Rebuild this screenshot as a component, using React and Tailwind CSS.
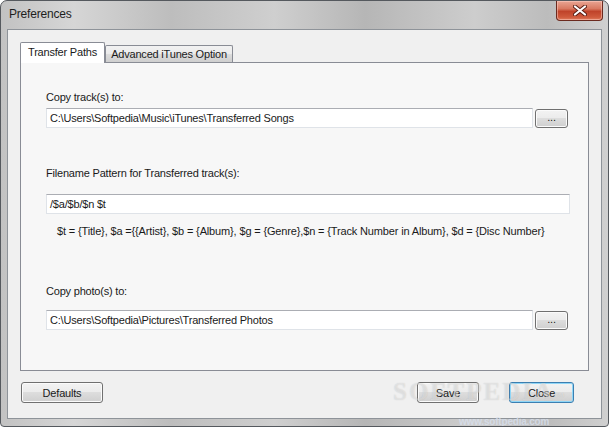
import React from 'react';

function PathRow({ value, browse = true }) {
  return (
    <div className={`flex items-center ${browse ? 'mr-[2px]' : ''}`}>
      <div className="flex h-[20px] flex-1 items-center border border-[#dfe3e8] border-t-[#abadb3] bg-white pl-[3px] leading-[14px]">
        {value}
      </div>
      {browse && (
        <button
          type="button"
          className="ml-[2px] mt-[1px] flex h-[19px] w-[33px] items-center justify-center rounded-[3px] border border-[#707070] bg-[linear-gradient(180deg,#f3f3f3_0%,#ebebeb_50%,#dddddd_50%,#cfcfcf_100%)] pb-[3px] text-[11px] leading-none shadow-[inset_0_0_0_1px_#fbfbfb]"
        >
          ...
        </button>
      )}
    </div>
  );
}

function WinButton({ label, className = '', isDefault = false }) {
  return (
    <button
      type="button"
      className={`flex h-[21px] items-center justify-center rounded-[3px] border bg-[linear-gradient(180deg,#f3f3f3_0%,#ebebeb_50%,#dddddd_50%,#cfcfcf_100%)] leading-[14px] ${
        isDefault
          ? 'border-[#3c7fb1] shadow-[inset_0_0_0_1px_#8fd6f7]'
          : 'border-[#707070] shadow-[inset_0_0_0_1px_#fbfbfb]'
      } ${className}`}
    >
      {label}
    </button>
  );
}

export default function App() {
  return (
    <div className="h-[427px] w-[609px] bg-white font-['Liberation_Sans',Arial,sans-serif] text-[11px] tracking-[-0.2px] text-[#1a1a1a]">
      <div className="relative flex h-full flex-col overflow-hidden rounded-t-[7px] rounded-b-[4px] border border-[#55595e] bg-[linear-gradient(90deg,#c2c2c2_0%,#d6d6d6_12%,#bdbdbd_28%,#cfcfcf_45%,#b6b6b6_60%,#cdcdcd_78%,#bcbcbc_90%,#d0d0d0_100%)]">
        {/* title bar */}
        <div className="flex h-[28px] items-center pl-[8px] pb-[2px] text-[12px] leading-[14px] text-[#1e1e1e]">
          Preferences
        </div>

        {/* close box */}
        <div className="absolute right-[5px] top-0 flex h-[20px] w-[47px] items-center justify-center rounded-b-[4px] border border-t-0 border-[#6b2a1f] bg-[linear-gradient(180deg,#e9a593_0%,#d97a62_40%,#c0432a_55%,#cf5a3c_85%,#e07c5e_100%)] shadow-[inset_0_0_0_1px_rgba(255,210,200,0.5)]">
          <svg width="14" height="11" viewBox="0 0 14 11">
            <path d="M2 1.5 L12 9.5 M12 1.5 L2 9.5" stroke="#5a1e14" strokeWidth="4" strokeLinecap="round" />
            <path d="M2 1.5 L12 9.5 M12 1.5 L2 9.5" stroke="#ffffff" strokeWidth="2.2" strokeLinecap="round" />
          </svg>
        </div>

        {/* client area */}
        <div className="mx-[6px] flex h-[390px] flex-col border border-[#8e9399] bg-[#f0f0f0] px-[12px] pt-[12px]">
          {/* tabs */}
          <div className="flex h-[20px] items-end">
            <div className="relative z-10 -mb-px flex h-[21px] w-[85px] items-center justify-center whitespace-nowrap rounded-t-[2px] border border-b-0 border-[#898c95] bg-white pb-[2px] leading-[14px]">
              Transfer Paths
            </div>
            <div className="flex h-[17px] w-[128px] items-center justify-center whitespace-nowrap rounded-t-[2px] border border-b-0 border-[#898c95] bg-[linear-gradient(180deg,#f2f2f2_0%,#ebebeb_50%,#dddddd_50%,#cfcfcf_100%)] leading-[14px]">
              Advanced iTunes Option
            </div>
          </div>

          {/* panel */}
          <div className="flex h-[309px] flex-col border border-[#898c95] bg-[#f7f7f7] pl-[25px] pr-[18px] pt-[27px]">
            <div className="leading-[14px]">Copy track(s) to:</div>
            <div className="mt-[4px]">
              <PathRow value="C:\Users\Softpedia\Music\iTunes\Transferred Songs" />
            </div>

            <div className="mt-[38px] leading-[14px]">Filename Pattern for Transferred track(s):</div>
            <div className="mt-[14px]">
              <PathRow value="/$a/$b/$n $t" browse={false} />
            </div>
            <div className="mt-[10px] whitespace-nowrap pl-[11px] leading-[14px] tracking-[-0.15px]">
              {'$t = {Title}, $a ={{Artist}, $b = {Album}, $g = {Genre},$n = {Track Number in Album}, $d = {Disc Number}'}
            </div>

            <div className="mt-[46px] leading-[14px]">Copy photo(s) to:</div>
            <div className="mt-[12px]">
              <PathRow value="C:\Users\Softpedia\Pictures\Transferred Photos" />
            </div>
          </div>

          {/* buttons */}
          <div className="mt-[11px] flex items-center">
            <WinButton label="Defaults" className="ml-[1px] w-[82px]" />
            <div className="flex-1" />
            <WinButton label="Save" className="w-[62px]" />
            <WinButton label="Close" className="ml-[30px] mr-[15px] w-[65px]" isDefault />
          </div>
        </div>

        {/* watermark */}
        <div className="pointer-events-none absolute left-[392px] top-[377px] font-['Liberation_Serif',serif] text-[25px] font-bold leading-[28px] tracking-[2px] text-white/40 [text-shadow:0_0_1px_rgba(90,90,90,0.25)]">
          SOFTPEDIA
          <span className="absolute -right-[10px] top-[3px] text-[6px] tracking-normal">TM</span>
        </div>
        <div className="pointer-events-none absolute bottom-[-1px] left-[458px] text-[10px] font-bold leading-[10px] text-[#d8e0ee]/80">
          www.softpedia.com
        </div>
      </div>
    </div>
  );
}
